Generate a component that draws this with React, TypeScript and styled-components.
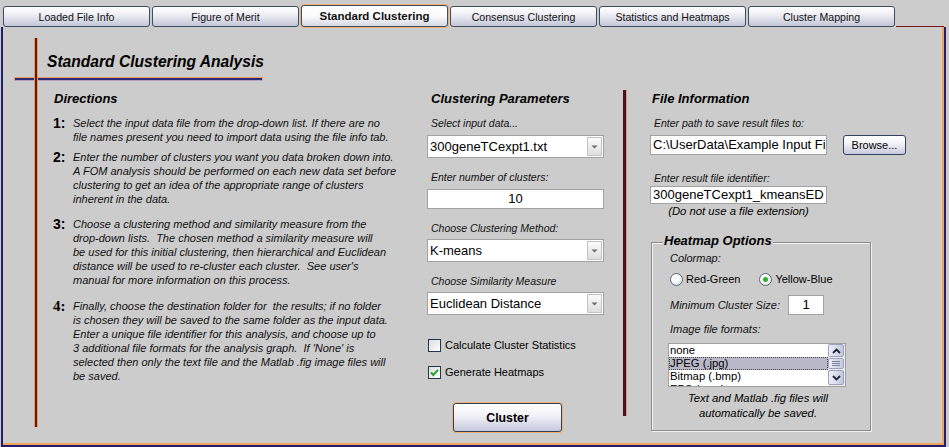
import React from 'react';
import styled, { createGlobalStyle, css } from 'styled-components';

const FONT = '"Liberation Sans", Arial, sans-serif';

const GlobalStyle = createGlobalStyle`
  html, body {
    margin: 0;
    padding: 0;
    background: #cccccc;
  }
  body {
    font-family: ${FONT};
    color: #000;
  }
`;

const TABS = [
  'Loaded File Info',
  'Figure of Merit',
  'Standard Clustering',
  'Consensus Clustering',
  'Statistics and Heatmaps',
  'Cluster Mapping',
];
const ACTIVE_TAB = 2;

const DIRECTIONS = [
  {
    num: '1:',
    gap: 0,
    lines: [
      'Select the input data file from the drop-down list. If there are no',
      'file names present you need to import data using the file info tab.',
    ],
  },
  {
    num: '2:',
    gap: 6,
    lines: [
      'Enter the number of clusters you want you data broken down into.',
      'A FOM analysis should be performed on each new data set before',
      'clustering to get an idea of the appropriate range of clusters',
      'inherent in the data.',
    ],
  },
  {
    num: '3:',
    gap: 11,
    lines: [
      'Choose a clustering method and similarity measure from the',
      'drop-down lists.  The chosen method a similarity measure will',
      'be used for this initial clustering, then hierarchical and Euclidean',
      "distance will be used to re-cluster each cluster.  See user's",
      'manual for more information on this process.',
    ],
  },
  {
    num: '4:',
    gap: 12,
    serif: true,
    lines: [
      'Finally, choose the destination folder for  the results; if no folder',
      'is chosen they will be saved to the same folder as the input data.',
      'Enter a unique file identifier for this analysis, and choose up to',
      "3 additional file formats for the analysis graph.  If 'None' is",
      'selected then only the text file and the Matlab .fig image files will',
      'be saved.',
    ],
  },
];

const FORMATS = ['none', 'JPEG (.jpg)', 'Bitmap (.bmp)', 'EPS (.eps)'];

/* ---------- frame & tabs ---------- */

const Screen = styled.div`
  width: 949px;
  height: 447px;
  box-sizing: border-box;
  padding-top: 5px;
  display: flex;
  flex-direction: column;
  overflow: hidden;
`;

const TabBar = styled.div`
  display: flex;
  align-items: flex-end;
  height: 22px;
  padding-left: 3px;
  gap: 2px;
  flex: none;
`;

const Tab = styled.div<{ $active?: boolean }>`
  width: 147px;
  height: 21px;
  box-sizing: border-box;
  display: flex;
  align-items: center;
  justify-content: center;
  border: 1px solid #3e4e60;
  border-radius: 3px;
  background: linear-gradient(#ffffff, #f1f1f6 35%, #c3c6d8);
  font-size: 10.6px;
  color: #111;

  ${p =>
    p.$active &&
    css`
      height: 22px;
      font-size: 11.5px;
      font-weight: bold;
      box-shadow: 0 0 0 1px #f2b072;
      background: linear-gradient(#ffffff, #fbfbfb 50%, #d6d8e4);
    `}
`;

const TabFiller = styled.div`
  flex: 1;
  align-self: stretch;
  margin: 0 5px 0 -1px;
  border-bottom: 1px solid #7c1414;
`;

const Panel = styled.div`
  flex: 1;
  display: flex;
  margin: 0 3px 0 1px;
  border: 2px solid #1f1f6b;
  border-top: none;
  box-shadow: inset -2px -2px 0 #f2a35e;
`;

/* ---------- left: title + directions ---------- */

const LeftPane = styled.section`
  position: relative;
  width: 424px;
  flex: none;
  display: flex;
  padding-left: 31px;
  box-sizing: border-box;
`;

const VRule = styled.div`
  position: relative;
  z-index: 1;
  flex: none;
  width: 4px;
  height: 389px;
  margin-top: 11px;
  box-sizing: border-box;
  background: #5e1c10;
  border-left: 1px solid #e99a55;
  border-right: 1px solid #e99a55;
`;

const TitleRule = styled.div`
  position: absolute;
  left: 11px;
  top: 50px;
  width: 249px;
  height: 4px;
  box-sizing: border-box;
  background: #2c2a78;
  border: 1px solid #ef9f55;
  border-bottom-color: #b9a0c0;
`;

const LeftContent = styled.div`
  flex: 1;
  padding-left: 9px;
  display: flex;
  flex-direction: column;
`;

const Title = styled.h1`
  margin: 26px 0 0;
  font-size: 15.6px;
  line-height: 18px;
  font-weight: bold;
  font-style: italic;
`;

const Heading = styled.h2<{ $indent?: number; $top?: number }>`
  margin: ${p => p.$top ?? 0}px 0 0 ${p => p.$indent ?? 0}px;
  font-size: 13px;
  line-height: 15px;
  font-weight: bold;
  font-style: italic;
`;

const Directions = styled.div`
  margin-left: 6px;
  display: flex;
  flex-direction: column;
`;

const DirList = styled.ol`
  list-style: none;
  margin: 10px 0 0;
  padding: 0;
`;

const DirItem = styled.li<{ $gap: number }>`
  display: flex;
  margin-top: ${p => p.$gap}px;
`;

const DirNum = styled.span<{ $serif?: boolean }>`
  width: 20px;
  flex: none;
  font-size: 14px;
  line-height: 15px;
  font-weight: bold;
  ${p =>
    p.$serif &&
    css`
      font-family: "Liberation Serif", "Times New Roman", serif;
      font-size: 15px;
    `}
`;

const DirText = styled.div`
  font-size: 11px;
  line-height: 14px;
  font-style: italic;
  white-space: pre;
  color: #111;
`;

/* ---------- shared controls ---------- */

const Label = styled.div<{ $top?: number; $indent?: number; $size?: number }>`
  margin: ${p => p.$top ?? 0}px 0 0 ${p => p.$indent ?? 0}px;
  font-size: ${p => p.$size ?? 10.5}px;
  line-height: 14px;
  font-style: italic;
  white-space: nowrap;
  color: #111;
`;

const ComboBox = styled.div<{ $top: number }>`
  margin-top: ${p => p.$top}px;
  width: 177px;
  height: 23px;
  box-sizing: border-box;
  display: flex;
  align-items: center;
  background: #fff;
  border: 1px solid #a2a2a2;
  font-size: 13px;
  padding-left: 2px;
`;

const ComboArrow = styled.span`
  margin-left: auto;
  margin-right: 1px;
  width: 15px;
  height: 19px;
  box-sizing: border-box;
  display: flex;
  align-items: center;
  justify-content: center;
  border: 1px solid #c4c4c4;
  background: linear-gradient(#fafafa, #dedede);
`;

const TextBox = styled.div<{ $top?: number; $w: number; $h: number; $align?: string }>`
  margin-top: ${p => p.$top ?? 0}px;
  width: ${p => p.$w}px;
  height: ${p => p.$h}px;
  box-sizing: border-box;
  flex: none;
  background: #fff;
  border: 1px solid #a2a2a2;
  font-size: 13px;
  line-height: ${p => p.$h - 2}px;
  padding: 0 2px;
  text-align: ${p => p.$align ?? 'left'};
  white-space: nowrap;
  overflow: hidden;
`;

const PushButton = styled.button<{ $focused?: boolean }>`
  box-sizing: border-box;
  padding: 0;
  border: 1px solid #32425e;
  border-radius: 3px;
  background: linear-gradient(#ffffff, #f3f3f8 40%, #c6c9dc);
  font-family: ${FONT};
  color: #000;
  ${p =>
    p.$focused &&
    css`
      box-shadow: 0 0 0 1px #f0b070;
    `}
`;

/* ---------- middle: clustering parameters ---------- */

const MidPane = styled.section`
  width: 177px;
  flex: none;
  padding-top: 64px;
  display: flex;
  flex-direction: column;
`;

const CheckRow = styled.label<{ $top: number }>`
  margin: ${p => p.$top}px 0 0 1px;
  display: flex;
  align-items: center;
  gap: 4px;
  font-size: 11px;
  line-height: 14px;
`;

const CheckBox = styled.span`
  width: 13px;
  height: 13px;
  box-sizing: border-box;
  display: flex;
  align-items: center;
  justify-content: center;
  border: 1px solid #1f3552;
  background: linear-gradient(135deg, #dcdcdc, #ffffff);
`;

const ClusterButton = styled(PushButton)`
  margin: 24px 0 0 26px;
  width: 109px;
  height: 29px;
  font-size: 12.3px;
  font-weight: bold;
`;

const Divider = styled.div`
  flex: none;
  margin: 63px 0 0 19px;
  width: 4px;
  height: 326px;
  box-sizing: border-box;
  background: #4b1020;
  border-right: 1px solid #d99a78;
`;

/* ---------- right: file info + heatmap options ---------- */

const RightPane = styled.section`
  flex: 1;
  padding: 64px 0 0 23px;
  display: flex;
  flex-direction: column;
`;

const Row = styled.div<{ $top?: number; $gap?: number }>`
  margin-top: ${p => p.$top ?? 0}px;
  display: flex;
  align-items: center;
  gap: ${p => p.$gap ?? 0}px;
`;

const BrowseButton = styled(PushButton)`
  width: 63px;
  height: 20px;
  font-size: 11px;
`;

const Note = styled.div`
  width: 177px;
  text-align: center;
  font-size: 11.3px;
  line-height: 14px;
  font-style: italic;
`;

const GroupBox = styled.div`
  margin: 24px 0 0 1px;
  width: 220px;
  height: 189px;
  box-sizing: border-box;
  border: 1px solid #8c8c8c;
  box-shadow: inset 1px 1px 0 #f2f2f2, 1px 1px 0 #f2f2f2;
  display: flex;
  flex-direction: column;
  padding-left: 18px;
`;

const Legend = styled.div`
  align-self: flex-start;
  margin: -10px 0 0 -7px;
  padding: 0 1px;
  background: #cccccc;
  font-size: 13px;
  line-height: 15px;
  font-weight: bold;
  font-style: italic;
`;

const RadioOption = styled.label`
  display: flex;
  align-items: center;
  gap: 3px;
  font-size: 11px;
  line-height: 14px;
`;

const Radio = styled.span<{ $on?: boolean }>`
  width: 13px;
  height: 13px;
  box-sizing: border-box;
  border-radius: 50%;
  border: 1px solid #59687a;
  background: radial-gradient(circle at 40% 35%, #ffffff 30%, #d4d6de);
  display: flex;
  align-items: center;
  justify-content: center;

  &::after {
    content: '';
    width: 5px;
    height: 5px;
    border-radius: 50%;
    background: ${p => (p.$on ? '#2fae2f' : 'transparent')};
  }
`;

const ListBox = styled.div`
  margin: 7px 0 0 -2px;
  width: 178px;
  height: 44px;
  box-sizing: border-box;
  border: 1px solid #a0a0a0;
  background: #fff;
  display: flex;
  overflow: hidden;
`;

const ListItems = styled.ul`
  flex: 1;
  list-style: none;
  margin: 0;
  padding: 0;
  overflow: hidden;
`;

const ListItem = styled.li<{ $selected?: boolean }>`
  height: 13px;
  line-height: 13px;
  font-size: 11.3px;
  padding-left: 1px;
  white-space: nowrap;
  ${p =>
    p.$selected &&
    css`
      background: #b8b8c8;
      outline: 1px dotted #444;
      outline-offset: -1px;
    `}
`;

const ScrollBar = styled.div`
  width: 16px;
  flex: none;
  display: flex;
  flex-direction: column;
  gap: 1px;
  padding: 0 1px 1px 0;
  background: #eeeef2;
`;

const ScrollButton = styled.span<{ $h: number }>`
  height: ${p => p.$h}px;
  box-sizing: border-box;
  display: flex;
  align-items: center;
  justify-content: center;
  border: 1px solid #9ba2c0;
  border-radius: 2px;
  background: linear-gradient(90deg, #eeeef8, #c4c8dc);
`;

const Footnote = styled.div`
  margin-top: 4px;
  width: 176px;
  text-align: center;
  font-size: 11.3px;
  line-height: 15px;
  font-style: italic;
`;

/* ---------- icons ---------- */

const DownTriangle = () => (
  <svg width="7" height="4" viewBox="0 0 7 4">
    <path d="M0.5 0.5 L6.5 0.5 L3.5 3.5 Z" fill="#6a6a6a" />
  </svg>
);

const Tick = () => (
  <svg width="11" height="11" viewBox="0 0 11 11">
    <path d="M2 5.5 L4.3 8 L9 2.8" fill="none" stroke="#22a322" strokeWidth="2" />
  </svg>
);

const Chevron = ({ up }: { up?: boolean }) => (
  <svg width="9" height="6" viewBox="0 0 9 6">
    <path
      d={up ? 'M1 5 L4.5 1.5 L8 5' : 'M1 1 L4.5 4.5 L8 1'}
      fill="none"
      stroke="#1c2440"
      strokeWidth="1.8"
    />
  </svg>
);

const Grip = () => (
  <svg width="8" height="5" viewBox="0 0 8 5">
    <path d="M0 0.5 H8 M0 2.5 H8 M0 4.5 H8" stroke="#7c82a0" strokeWidth="1" />
  </svg>
);

/* ---------- page ---------- */

export default function App() {
  return (
    <>
      <GlobalStyle />
      <Screen>
        <TabBar>
          {TABS.map((t, i) => (
            <Tab key={t} $active={i === ACTIVE_TAB}>
              {t}
            </Tab>
          ))}
          <TabFiller />
        </TabBar>

        <Panel>
          <LeftPane>
            <TitleRule />
            <VRule />
            <LeftContent>
              <Title>Standard Clustering Analysis</Title>
              <Directions>
                <Heading $top={20} $indent={1}>
                  Directions
                </Heading>
                <DirList>
                  {DIRECTIONS.map(d => (
                    <DirItem key={d.num} $gap={d.gap}>
                      <DirNum $serif={d.serif}>{d.num}</DirNum>
                      <DirText>{d.lines.join('\n')}</DirText>
                    </DirItem>
                  ))}
                </DirList>
              </Directions>
            </LeftContent>
          </LeftPane>

          <MidPane>
            <Heading $indent={4}>Clustering Parameters</Heading>
            <Label $top={10} $indent={4}>
              Select input data...
            </Label>
            <ComboBox $top={5}>
              300geneTCexpt1.txt
              <ComboArrow>
                <DownTriangle />
              </ComboArrow>
            </ComboBox>
            <Label $top={12} $indent={4}>
              Enter number of clusters:
            </Label>
            <TextBox $top={5} $w={177} $h={20} $align="center">
              10
            </TextBox>
            <Label $top={12} $indent={4}>
              Choose Clustering Method:
            </Label>
            <ComboBox $top={4}>
              K-means
              <ComboArrow>
                <DownTriangle />
              </ComboArrow>
            </ComboBox>
            <Label $top={12} $indent={4}>
              Choose Similarity Measure
            </Label>
            <ComboBox $top={4}>
              Euclidean Distance
              <ComboArrow>
                <DownTriangle />
              </ComboArrow>
            </ComboBox>
            <CheckRow $top={23}>
              <CheckBox />
              Calculate Cluster Statistics
            </CheckRow>
            <CheckRow $top={13}>
              <CheckBox>
                <Tick />
              </CheckBox>
              Generate Heatmaps
            </CheckRow>
            <ClusterButton $focused>Cluster</ClusterButton>
          </MidPane>

          <Divider />

          <RightPane>
            <Heading $indent={2}>File Information</Heading>
            <Label $top={10} $indent={4}>
              Enter path to save result files to:
            </Label>
            <Row $top={5} $gap={16}>
              <TextBox $w={177} $h={20}>
                C:\UserData\Example Input Files
              </TextBox>
              <BrowseButton>Browse...</BrowseButton>
            </Row>
            <Label $top={16} $indent={4}>
              Enter result file identifier:
            </Label>
            <TextBox $top={1} $w={177} $h={18}>
              300geneTCexpt1_kmeansED
            </TextBox>
            <Note>(Do not use a file extension)</Note>

            <GroupBox>
              <Legend>Heatmap Options</Legend>
              <Label $top={3} $size={11}>
                Colormap:
              </Label>
              <Row $top={7} $gap={19}>
                <RadioOption>
                  <Radio />
                  Red-Green
                </RadioOption>
                <RadioOption>
                  <Radio $on />
                  Yellow-Blue
                </RadioOption>
              </Row>
              <Row $top={9}>
                <Label $size={11} style={{ width: 118 }}>
                  Minimum Cluster Size:
                </Label>
                <TextBox $w={36} $h={20} $align="center">
                  1
                </TextBox>
              </Row>
              <Label $top={7} $size={11}>
                Image file formats:
              </Label>
              <ListBox>
                <ListItems>
                  {FORMATS.map((f, i) => (
                    <ListItem key={f} $selected={i === 1}>
                      {f}
                    </ListItem>
                  ))}
                </ListItems>
                <ScrollBar>
                  <ScrollButton $h={13}>
                    <Chevron up />
                  </ScrollButton>
                  <ScrollButton $h={11}>
                    <Grip />
                  </ScrollButton>
                  <ScrollButton $h={15}>
                    <Chevron />
                  </ScrollButton>
                </ScrollBar>
              </ListBox>
              <Footnote>
                Text and Matlab .fig files will
                <br />
                automatically be saved.
              </Footnote>
            </GroupBox>
          </RightPane>
        </Panel>
      </Screen>
    </>
  );
}
